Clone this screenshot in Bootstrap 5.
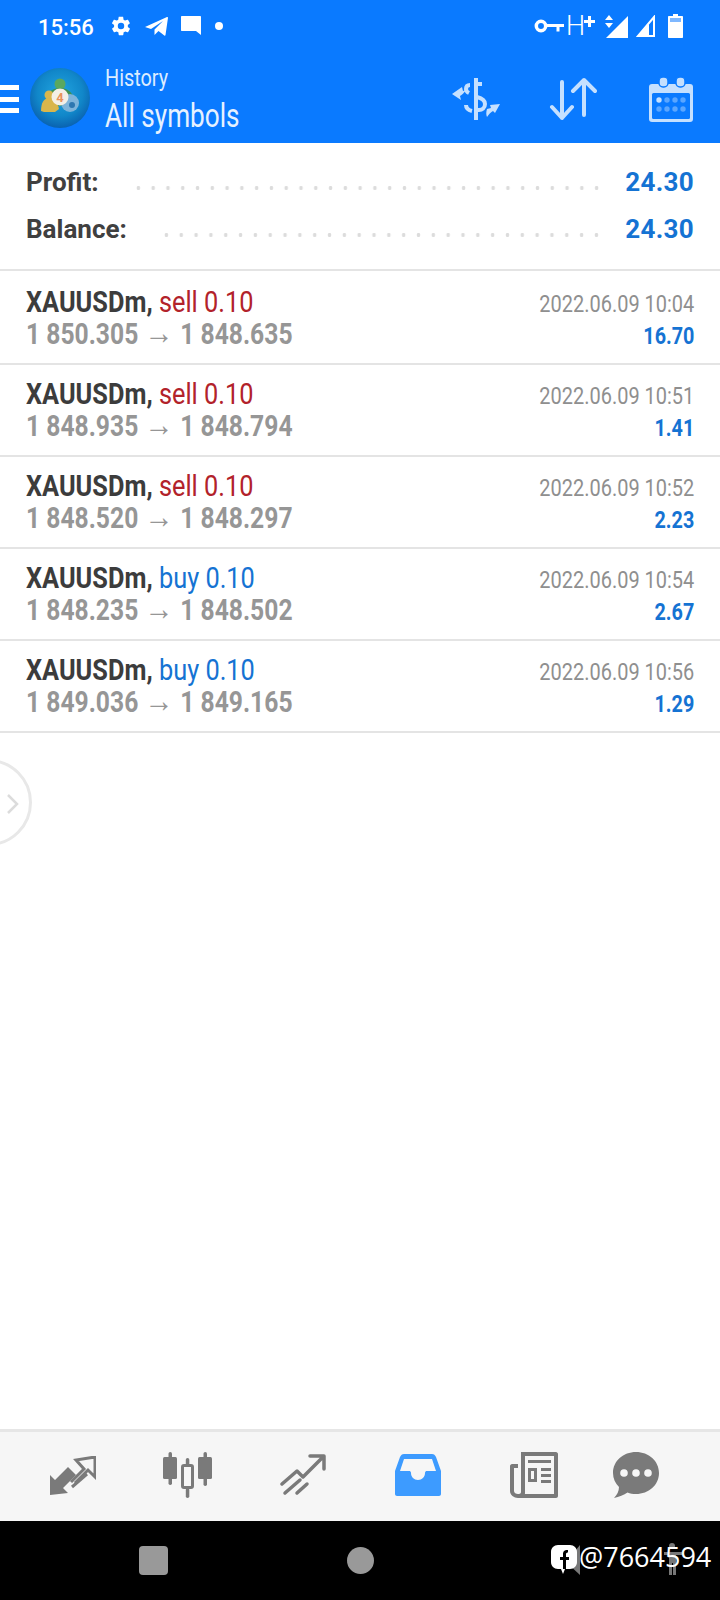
<!DOCTYPE html>
<html lang="en">

<head>
    <meta charset="UTF-8" />
    <meta name="viewport" content="width=device-width, initial-scale=1.0" />
    <link rel="stylesheet" href="https://cdn.jsdelivr.net/npm/bootstrap@5.3.6/dist/css/bootstrap.min.css" />
    <script src="https://cdn.jsdelivr.net/npm/bootstrap@5.3.6/dist/js/bootstrap.bundle.min.js"></script>
    <title>History</title>
    <style>
        html, body { height: 1600px; overflow: hidden; }
        body { width: 720px; margin: 0; background: #fff; font-family: Roboto, sans-serif; }
        .narrow { display: inline-block; transform: scaleX(.845); transform-origin: left center; white-space: nowrap; }
        .narrow-r { display: inline-block; transform: scaleX(.86); transform-origin: right center; white-space: nowrap; }

        .app-head { height: 143px; background: #0a7aff; color: #fff; flex: none; }
        .status-row { height: 52px; padding: 0 37px 0 38px; }
        .clock { font-size: 22px; font-weight: 500; width: 56px; margin-right: 16px; margin-top: 2px; }
        .stat-ic { margin-right: 13px; }
        .stat-dot { margin-left: 1px; }
        .burger { width: 19px; height: 28px; margin: 33px 11px 0 0; }
        .burger i { display: block; height: 5px; background: #fff; }
        .tool-row { height: 91px; }
        .app-logo { margin-top: 16px; }
        .head-text { margin: 12px 0 0 15px; }
        .sub-title { font-size: 23.5px; line-height: 28px; color: #dcecff; }
        .main-title { font-size: 32.5px; line-height: 38px; margin-top: 5px; color: #e6f1ff; }
        .main-title .narrow { transform: scaleX(.805); }
        .tool-icons { margin: 18px 27px 0 0; height: 58px; }

        .summary { height: 128px; padding: 16px 26px 0; border-bottom: 2px solid #e4e4e4; flex: none; }
        .sum-row { height: 47px; font-size: 26px; font-weight: 700; color: #404040; }
        .sum-val { color: #1573d3; font-size: 26px; letter-spacing: .3px; }
        .dots { height: 4px; margin: 10px 21px 0 32px; background: radial-gradient(circle, #dcdcdc 1.7px, transparent 2.1px) 0 0 / 15px 4px round; }

        .deal { height: 92px; padding: 12px 26px 0; border-bottom: 2px solid #e4e4e4 !important; }
        .deal:first-child { height: 94px; padding-top: 14px; }
        .sym { font-size: 30px; line-height: 33px; font-weight: 700; color: #3c3c3c; }
        .lot { font-weight: 400; }
        .sell { color: #b2222a; }
        .buy { color: #1573d3; }
        .price { font-size: 29px; line-height: 32px; font-weight: 700; color: #969696; }
        .price .narrow { transform: scaleX(.85); }
        .price em { font-style: normal; font-weight: 400; font-size: 34px; line-height: 0; margin-right: 1px; }
        .deal-side { padding-top: 3px; }
        .when { font-size: 24px; line-height: 33px; color: #8f8f8f; }
        .when .narrow-r { transform: scaleX(.832); }
        .gain { font-size: 23px; line-height: 32px; font-weight: 700; color: #1573d3; }

        .edge-btn { position: absolute; left: -55px; top: 759px; width: 87px; height: 87px; border: 3px solid #e8e8e8; border-radius: 50%; }
        .edge-arrow { position: absolute; left: 6px; top: 793px; }

        .tabbar { height: 92px; background: #f6f6f6; border-top: 3px solid #e6e6e6; flex: none; padding: 0 0 3px 50px; }
        .tab-ic { flex: none; }
        .sysbar { height: 79px; background: #000; flex: none; position: relative; }
        .sys-square { position: absolute; left: 139px; top: 25px; width: 29px; height: 29px; background: #999; border-radius: 4px; }
        .sys-round { position: absolute; left: 347px; top: 26px; width: 27px; height: 27px; background: #999; border-radius: 50%; }
        .sys-back { position: absolute; left: 566px; top: 24px; }
        .sys-person { position: absolute; left: 664px; top: 22px; }
        .mark-logo { position: absolute; left: 551px; top: 23px; }
        .mark-text { position: absolute; left: 579px; top: 17px; font-family: "Open Sans", sans-serif; font-weight: 400; font-size: 27px; line-height: 38px; color: #fff; }
    </style>
</head>

<body class="d-flex flex-column position-relative">
    <header class="app-head">
        <div class="status-row d-flex align-items-center justify-content-between">
            <div class="d-flex align-items-center">
                <span class="clock">15:56</span>
                <!-- gear -->
                <svg class="stat-ic" width="22" height="22" viewBox="0 0 24 24" fill="#fff"><path d="M19.4 13c.1-.3.1-.7.1-1s0-.7-.1-1l2.100-1.600c.2-.2.2-.4.1-.6l-2-3.500c-.1-.2-.4-.3-.6-.2l-2.500 1c-.5-.4-1.100-.7-1.700-1L14.400 2.400c0-.2-.2-.4-.5-.4h-4c-.2 0-.4.2-.5.4L9 5.100c-.6.2-1.200.6-1.700 1l-2.500-1c-.2-.1-.5 0-.6.2l-2 3.500c-.1.200-.1.500.1.600L4.500 11c0 .3-.1.700-.1 1s0 .7.1 1l-2.100 1.600c-.2.200-.2.400-.1.600l2 3.500c.1.200.4.300.6.200l2.500-1c.5.400 1.100.7 1.700 1l.4 2.700c0 .2.2.4.5.4h4c.2 0 .4-.2.500-.4l.4-2.700c.6-.2 1.200-.6 1.700-1l2.500 1c.2.100.5 0 .6-.2l2-3.500c.1-.2.1-.5-.1-.6L19.400 13zM12 15.500a3.500 3.500 0 1 1 0-7 3.500 3.500 0 0 1 0 7z"/></svg>
                <!-- telegram -->
                <svg class="stat-ic" width="23" height="20" viewBox="0 0 23 20" fill="#fff"><path d="M0 11 22 1c.6-.2 1 .1 1 .7L20.500 19c-.1.700-.7.900-1.200.5L13.500 15 9.500 19V13.500L18 5 6 13z"/></svg>
                <!-- message -->
                <svg class="stat-ic" width="20" height="20" viewBox="0 0 20 20" fill="#fff"><path d="M1 0h18c.6 0 1 .4 1 1v18l-5-4H1c-.6 0-1-.4-1-1V1c0-.6.4-1 1-1z"/></svg>
                <svg class="stat-dot" width="8" height="8" viewBox="0 0 8 8" fill="#fff"><circle cx="4" cy="4" r="4"/></svg>
            </div>
            <div class="d-flex align-items-center">
                <!-- key -->
                <svg width="30" height="14" viewBox="0 0 30 14" fill="none" stroke="#fff"><circle cx="7" cy="7" r="4.700" stroke-width="3.500"/><path d="M12 6.500h18M24 6.500v6" stroke-width="3"/></svg>
                <span class="text-white" style="font-size:27px;line-height:30px;font-weight:300;margin:0 -2px 0 2px">H</span>
                <svg width="13" height="24" viewBox="0 0 13 24" fill="#fff" class="me-2"><path d="M5 2h3v4h4v3H8v4H5V9H1V6h4z"/></svg>
                <!-- signal with data arrows -->
                <svg width="24" height="24" viewBox="0 0 24 24" fill="#fff" style="margin-right:8px"><path d="M24 2v22H2zM5 1l4 5H1zM5 14l-4-5h8z"/></svg>
                <svg width="20" height="22" viewBox="0 0 20 22" fill="none" stroke="#fff" stroke-width="2" style="margin-right:12px"><path d="M18 2v19H2z"/><path d="M1 22h12V9z" fill="#fff" stroke="none"/></svg>
                <!-- battery -->
                <svg width="15" height="24" viewBox="0 0 15 24" fill="#fff"><path d="M5 0h5v2h4c.6 0 1 .4 1 1v20c0 .6-.4 1-1 1H1c-.6 0-1-.4-1-1V3c0-.6.4-1 1-1h4z"/><rect x="2" y="4" width="11" height="4" fill="#7fb8ff"/></svg>
            </div>
        </div>
        <div class="tool-row d-flex align-items-start">
            <div class="burger d-flex flex-column justify-content-between"><i></i><i></i><i></i></div>
            <!-- app logo -->
            <svg class="app-logo" width="60" height="60" viewBox="0 0 60 60">
                <defs><radialGradient id="lg" cx=".5" cy=".42" r=".58"><stop offset="0" stop-color="#22a5e0"/><stop offset=".65" stop-color="#1187c9"/><stop offset="1" stop-color="#0a62b0"/></radialGradient></defs>
                <circle cx="30" cy="30" r="30" fill="url(#lg)"/>
                <circle cx="30" cy="16" r="5.500" fill="#5aa860"/>
                <path d="M16 32c1-8 7-12 14-12s13 4 14 12l-7 6H22z" fill="#3f9150"/>
                <circle cx="19" cy="27" r="4.500" fill="#d9b64c"/>
                <path d="M11 43c0-8 3-13 8-13s9 5 10 11l-4 3H14z" fill="#d9b64c"/>
                <circle cx="40" cy="35" r="9" fill="#7fb4da"/>
                <circle cx="42" cy="37" r="3" fill="#2f77b0"/>
                <circle cx="30" cy="29" r="8.500" fill="#f3efe6"/>
                <text x="30" y="34" text-anchor="middle" font-family="Roboto, sans-serif" font-weight="700" font-size="13" fill="#e8925c">4</text>
            </svg>
            <div class="head-text">
                <div class="sub-title"><span class="narrow">History</span></div>
                <div class="main-title"><span class="narrow">All symbols</span></div>
            </div>
            <div class="tool-icons ms-auto d-flex align-items-center">
                <!-- swap dollar -->
                <svg width="50" height="44" viewBox="0 0 50 44" fill="none" stroke="#c5e0ff" style="margin-right:48px">
                    <path d="M25 1v42" stroke-width="4"/>
                    <path d="M19 8c-3 0-4 2-4 4s1 3 3 4M31 7h-5M26 20c4 1 8 3 8 7s-3 6-6 6h-3" stroke-width="4"/>
                    <path d="M15 28c0 3 2 5 6 6" stroke-width="4"/>
                    <path d="M1 17l10-7 1 4 3-1c-2 3-4 5-6 6l1 4z" fill="#c5e0ff" stroke="none"/>
                    <path d="M49 27l-10 1 1 3-4 1c-1 3-1 6 0 8 2-3 4-5 6-6l2 2z" fill="#c5e0ff" stroke="none"/>
                </svg>
                <!-- sort -->
                <svg width="48" height="44" viewBox="0 0 48 44" fill="none" stroke="#c5e0ff" stroke-width="4" stroke-linecap="round" stroke-linejoin="round" style="margin-right:52px">
                    <path d="M13 5v36M3 30l10 11 10-11M35 38V3M24 14 35 3l11 11"/>
                </svg>
                <!-- calendar -->
                <svg width="44" height="46" viewBox="0 0 44 46" fill="#c5e0ff">
                    <rect x="0" y="8" width="44" height="38" rx="3"/>
                    <rect x="10" y="1" width="9" height="10" rx="4" stroke="#0a7aff" stroke-width="1.500"/>
                    <rect x="27" y="1" width="9" height="10" rx="4" stroke="#0a7aff" stroke-width="1.500"/>
                    <rect x="3" y="17" width="38" height="26" rx="1.500" fill="#0a7aff"/>
                    <g fill="#5ba6ff">
                        <circle cx="18" cy="24" r="2.700"/><circle cx="26" cy="24" r="2.700"/><circle cx="34" cy="24" r="2.700"/>
                        <circle cx="10" cy="33" r="2.700"/><circle cx="18" cy="33" r="2.700"/><circle cx="26" cy="33" r="2.700"/><circle cx="34" cy="33" r="2.700"/>
                    </g>
                    <circle cx="10" cy="24" r="2.700"/>
                </svg>
            </div>
        </div>
    </header>

    <section class="summary">
        <div class="sum-row d-flex align-items-center">
            <span>Profit:</span>
            <div class="dots flex-grow-1"></div>
            <span class="sum-val">24.30</span>
        </div>
        <div class="sum-row d-flex align-items-center">
            <span>Balance:</span>
            <div class="dots flex-grow-1"></div>
            <span class="sum-val">24.30</span>
        </div>
    </section>

    <div id="deals" class="list-group list-group-flush"></div>

    <div class="edge-btn"></div>
    <svg class="edge-arrow" width="14" height="22" viewBox="0 0 14 22" fill="none" stroke="#dcdcdc" stroke-width="2.500"><path d="M2 2l9 9-9 9"/></svg>

    <div class="flex-grow-1"></div>

    <nav class="tabbar d-flex align-items-center">
        <!-- trade -->
        <svg class="tab-ic" width="46" height="39" viewBox="0 0 46 39" fill="#7a7a7a">
            <path d="M0 39V19l5 5L18 11l8 8-13 13 5 5z"/>
            <path d="M21 26 34 13l-8-9 19-3v20l-7-7-13 13" fill="none" stroke="#7a7a7a" stroke-width="3"/>
            <path d="M22 31 37 18" fill="none" stroke="#7a7a7a" stroke-width="3"/>
        </svg>
        <!-- candles -->
        <svg class="tab-ic" width="49" height="46" viewBox="0 0 49 46" fill="#7a7a7a" style="margin-left:67px">
            <rect x="0" y="5" width="14" height="22" rx="1.500"/><rect x="5.500" y="0" width="3.500" height="33" rx="1.700"/>
            <rect x="35" y="5" width="14" height="22" rx="1.500"/><rect x="40.500" y="0" width="3.500" height="34" rx="1.700"/>
            <rect x="19.500" y="13.500" width="10" height="22" rx="1.500" fill="none" stroke="#7a7a7a" stroke-width="3"/><rect x="22.800" y="6" width="3.500" height="7" rx="1.700"/><rect x="22.800" y="36" width="3.500" height="10" rx="1.700"/>
        </svg>
        <!-- trend -->
        <svg class="tab-ic" width="46" height="44" viewBox="0 0 46 44" fill="none" stroke="#7a7a7a" stroke-width="3.500" stroke-linecap="round" stroke-linejoin="round" style="margin-left:68px">
            <path d="M2 31 17 18l6 6L43 4M30 3h14v13"/>
            <path d="M5 40 20 27M17 40l10-9"/>
        </svg>
        <!-- inbox, active -->
        <svg class="tab-ic" width="46" height="42" viewBox="0 0 46 42" fill="#3d9bff" style="margin-left:69px">
            <path d="M9 0h28c2 0 3 1 4 3l5 14v23c0 1-1 2-2 2H2c-1 0-2-1-2-2V17L5 3c1-2 2-3 4-3zM9 5 5 17h9c1 0 2 .5 2 2 0 4 3 7 7 7s7-3 7-7c0-1.500 1-2 2-2h9L37 5z" fill-rule="evenodd"/>
        </svg>
        <!-- news -->
        <svg class="tab-ic" width="48" height="46" viewBox="0 0 48 46" fill="#7a7a7a" style="margin-left:69px">
            <path d="M11 0h35c1 0 2 1 2 2v42c0 1-1 2-2 2H8c-4 0-8-3-8-7V14c0-1 1-2 2-2h6v4H4v23c0 2 2 3 4 3h1c1 0 2-1 2-2zM15 4v37c0 .5 0 1-.3 1H44V4z" fill-rule="evenodd"/>
            <rect x="18" y="8" width="23" height="3"/><rect x="18" y="16" width="9" height="14" /><rect x="21" y="19" width="3" height="8" fill="#f6f6f6"/><rect x="31" y="16" width="10" height="3"/><rect x="31" y="22" width="10" height="3"/><rect x="31" y="28" width="10" height="3"/>
        </svg>
        <!-- chat -->
        <svg class="tab-ic" width="46" height="46" viewBox="0 0 46 46" fill="#7a7a7a" style="margin-left:55px">
            <path d="M23 0c12.700 0 23 9 23 21s-10.300 21-23 21c-3 0-6-.5-8.500-1.500C11 43 6 45 1 46c3-3 5-7 5-11-3.700-3.700-6-8.500-6-14C0 9 10.300 0 23 0z"/>
            <circle cx="11" cy="21" r="3.800" fill="#f6f6f6"/><circle cx="23" cy="21" r="3.800" fill="#f6f6f6"/><circle cx="35" cy="21" r="3.800" fill="#f6f6f6"/>
        </svg>
    </nav>

    <div class="sysbar">
        <div class="sys-square"></div>
        <div class="sys-round"></div>
        <svg class="sys-back" width="14" height="30" viewBox="0 0 14 30" fill="#777"><path d="M14 0v30L0 17z"/></svg>
        <svg class="sys-person" width="18" height="32" viewBox="0 0 18 32" fill="#777"><circle cx="8" cy="3" r="3"/><path d="M0 9h18v3h-6v20H9V20H8v12H5V12H0z"/></svg>
        <svg class="mark-logo" width="26" height="30" viewBox="0 0 26 30"><path d="M7 1h12c4 0 7 3 7 7v10c0 4-3 7-7 7h-5l-2 5-2-5H7c-4 0-7-3-7-7V8c0-4 3-7 7-7z" fill="#fff"/><path d="M17 6c-4-.5-5 2-5 4v3H9v3h3v9h3v-9h3v-3h-3v-3c0-1 1-1.500 2-1.500z" fill="#000"/></svg>
        <span class="mark-text">@7664594</span>
    </div>

    <script>
        const deals = [
            ['sell', '1 850.305', '1 848.635', '2022.06.09 10:04', '16.70'],
            ['sell', '1 848.935', '1 848.794', '2022.06.09 10:51', '1.41'],
            ['sell', '1 848.520', '1 848.297', '2022.06.09 10:52', '2.23'],
            ['buy', '1 848.235', '1 848.502', '2022.06.09 10:54', '2.67'],
            ['buy', '1 849.036', '1 849.165', '2022.06.09 10:56', '1.29']
        ];
        const box = document.getElementById('deals');
        deals.forEach(d => {
            const row = document.createElement('div');
            row.className = 'deal list-group-item d-flex justify-content-between';
            row.innerHTML = `
                <div>
                    <div class="sym"><span class="narrow">XAUUSDm, <span class="lot ${d[0]}">${d[0]} 0.10</span></span></div>
                    <div class="price"><span class="narrow">${d[1]} <em>→</em> ${d[2]}</span></div>
                </div>
                <div class="deal-side text-end">
                    <div class="when"><span class="narrow-r">${d[3]}</span></div>
                    <div class="gain"><span class="narrow-r">${d[4]}</span></div>
                </div>`;
            box.appendChild(row);
        });
    </script>
</body>

</html>
